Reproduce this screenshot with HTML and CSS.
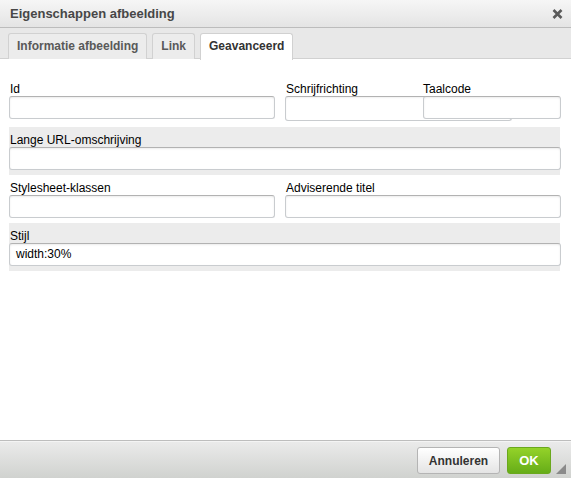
FILE: index.html
```html
<!DOCTYPE html>
<html lang="nl">
<head>
<meta charset="utf-8">
<title>Eigenschappen afbeelding</title>
<link rel="stylesheet" href="styles.css">
</head>
<body>
<div class="dialog">
  <div class="titlebar">
    <span class="title">Eigenschappen afbeelding</span>
    <span class="close" aria-label="Sluiten">
      <svg width="11" height="10" viewBox="0 0 11 10"><path d="M1.5 1 L9.5 9 M9.5 1 L1.5 9" stroke="#5a5a5a" stroke-width="2.6" stroke-linecap="butt"/></svg>
    </span>
  </div>
  <div class="tabs">
    <div class="tab">Informatie afbeelding</div>
    <div class="tab">Link</div>
    <div class="tab active">Geavanceerd</div>
  </div>
  <div class="contents">
    <div class="row first">
      <div class="field">
        <label class="label">Id</label>
        <div class="input short"></div>
      </div>
      <div class="pair">
        <div class="field">
          <label class="label">Schrijfrichting</label>
          <div class="select"></div>
        </div>
        <div class="field">
          <label class="label">Taalcode</label>
          <div class="input"></div>
        </div>
      </div>
    </div>
    <div class="row shaded">
      <div class="field wide">
        <label class="label">Lange URL-omschrijving</label>
        <div class="input"></div>
      </div>
    </div>
    <div class="row">
      <div class="field">
        <label class="label">Stylesheet-klassen</label>
        <div class="input short"></div>
      </div>
      <div class="field">
        <label class="label">Adviserende titel</label>
        <div class="input"></div>
      </div>
    </div>
    <div class="row shaded">
      <div class="field wide">
        <label class="label">Stijl</label>
        <div class="input">width:30%</div>
      </div>
    </div>
  </div>
  <div class="footer">
    <button class="btn cancel">Annuleren</button>
    <button class="btn ok">OK</button>
    <span class="grip"></span>
  </div>
</div>
</body>
</html>
```

FILE: styles.css
```css
html, body {
  margin: 0;
  padding: 0;
  background: #fff;
}

.dialog {
  width: 571px;
  height: 478px;
  display: flex;
  flex-direction: column;
  font-family: Arial, "Liberation Sans", sans-serif;
  color: #000;
  position: relative;
  overflow: hidden;
}

.titlebar {
  height: 26px;
  border-bottom: 1px solid #bcbcbc;
  background: linear-gradient(#f6f6f6, #e4e4e4);
  display: flex;
  align-items: center;
  justify-content: space-between;
  padding: 1px 8px 0 10px;
  box-sizing: content-box;
}

.title {
  font-size: 13px;
  font-weight: bold;
  color: #474747;
  line-height: 16px;
}

.close {
  display: flex;
  width: 11px;
  height: 10px;
  margin-top: -1px;
}

.tabs {
  height: 25px;
  padding: 5px 0 0 8px;
  background: #e8e8e8;
  border-bottom: 1px solid #d1d1d1;
  display: flex;
  gap: 5px;
  align-items: flex-start;
}

.tab {
  height: 25px;
  line-height: 24px;
  padding: 0 8px;
  border: 1px solid #d1d1d1;
  border-bottom: none;
  border-radius: 3px 3px 0 0;
  background: #ececec;
  font-size: 12px;
  font-weight: bold;
  color: #595959;
}

.tab.active {
  background: #fff;
  color: #333;
  height: 26px;
  margin-bottom: -1px;
}

.contents {
  flex: 1;
  padding: 17px 11px 0 9px;
}

.row {
  display: grid;
  grid-template-columns: 276px 276px;
  padding: 6px 0 5px;
  height: 37px;
}

.row.first {
  height: 39px;
  padding-bottom: 6px;
}

.row.shaded {
  background: #ececec;
  grid-template-columns: 552px;
}

.field {
  display: flex;
  flex-direction: column;
  min-width: 0;
}

.label {
  font-size: 12px;
  line-height: 14px;
  height: 14px;
  padding-left: 1px;
  white-space: nowrap;
}

.input {
  box-sizing: border-box;
  height: 23px;
  border: 1px solid #c9cccf;
  border-top-color: #b2b2b2;
  border-radius: 3px;
  background: #fff;
  box-shadow: inset 0 1px 2px rgba(0, 0, 0, 0.08);
  font-size: 12px;
  line-height: 21px;
  padding-left: 6px;
  position: relative;
}

.input.short {
  width: 266px;
}

.pair {
  display: grid;
  grid-template-columns: 138px 138px;
}

.select {
  box-sizing: border-box;
  width: 227px;
  height: 25px;
  border: 1px solid #c9cccf;
  border-top-color: #b2b2b2;
  border-radius: 3px;
  background: #fff;
  box-shadow: inset 0 1px 2px rgba(0, 0, 0, 0.06);
}

.pair .field:last-child .label {
  padding-left: 0;
}

.footer {
  border-top: 1px solid #bdbdbd;
  box-shadow: inset 0 1px 0 #f4f4f4;
  background: linear-gradient(#ebebeb, #d0d2cf);
  display: flex;
  justify-content: flex-end;
  align-items: flex-start;
  padding: 6px 20px 0 0;
  box-sizing: border-box;
  height: 38px;
  gap: 7px;
}

.btn {
  height: 27px;
  border-radius: 3px;
  font-family: Arial, "Liberation Sans", sans-serif;
  font-size: 12px;
  font-weight: bold;
  padding: 0;
  margin: 0;
  cursor: pointer;
}

.btn.cancel {
  width: 83px;
  border: 1px solid #b4b4b4;
  background: linear-gradient(#ffffff, #e4e4e4);
  color: #333;
}

.btn.ok {
  width: 44px;
  border: 1px solid #6aa81d;
  background: linear-gradient(#94d229, #66ad18);
  color: #fff;
  font-size: 13px;
}

.grip {
  position: absolute;
  right: 5px;
  bottom: 4px;
  width: 0;
  height: 0;
  border-left: 10px solid transparent;
  border-bottom: 10px solid #8a8a8a;
}
```
